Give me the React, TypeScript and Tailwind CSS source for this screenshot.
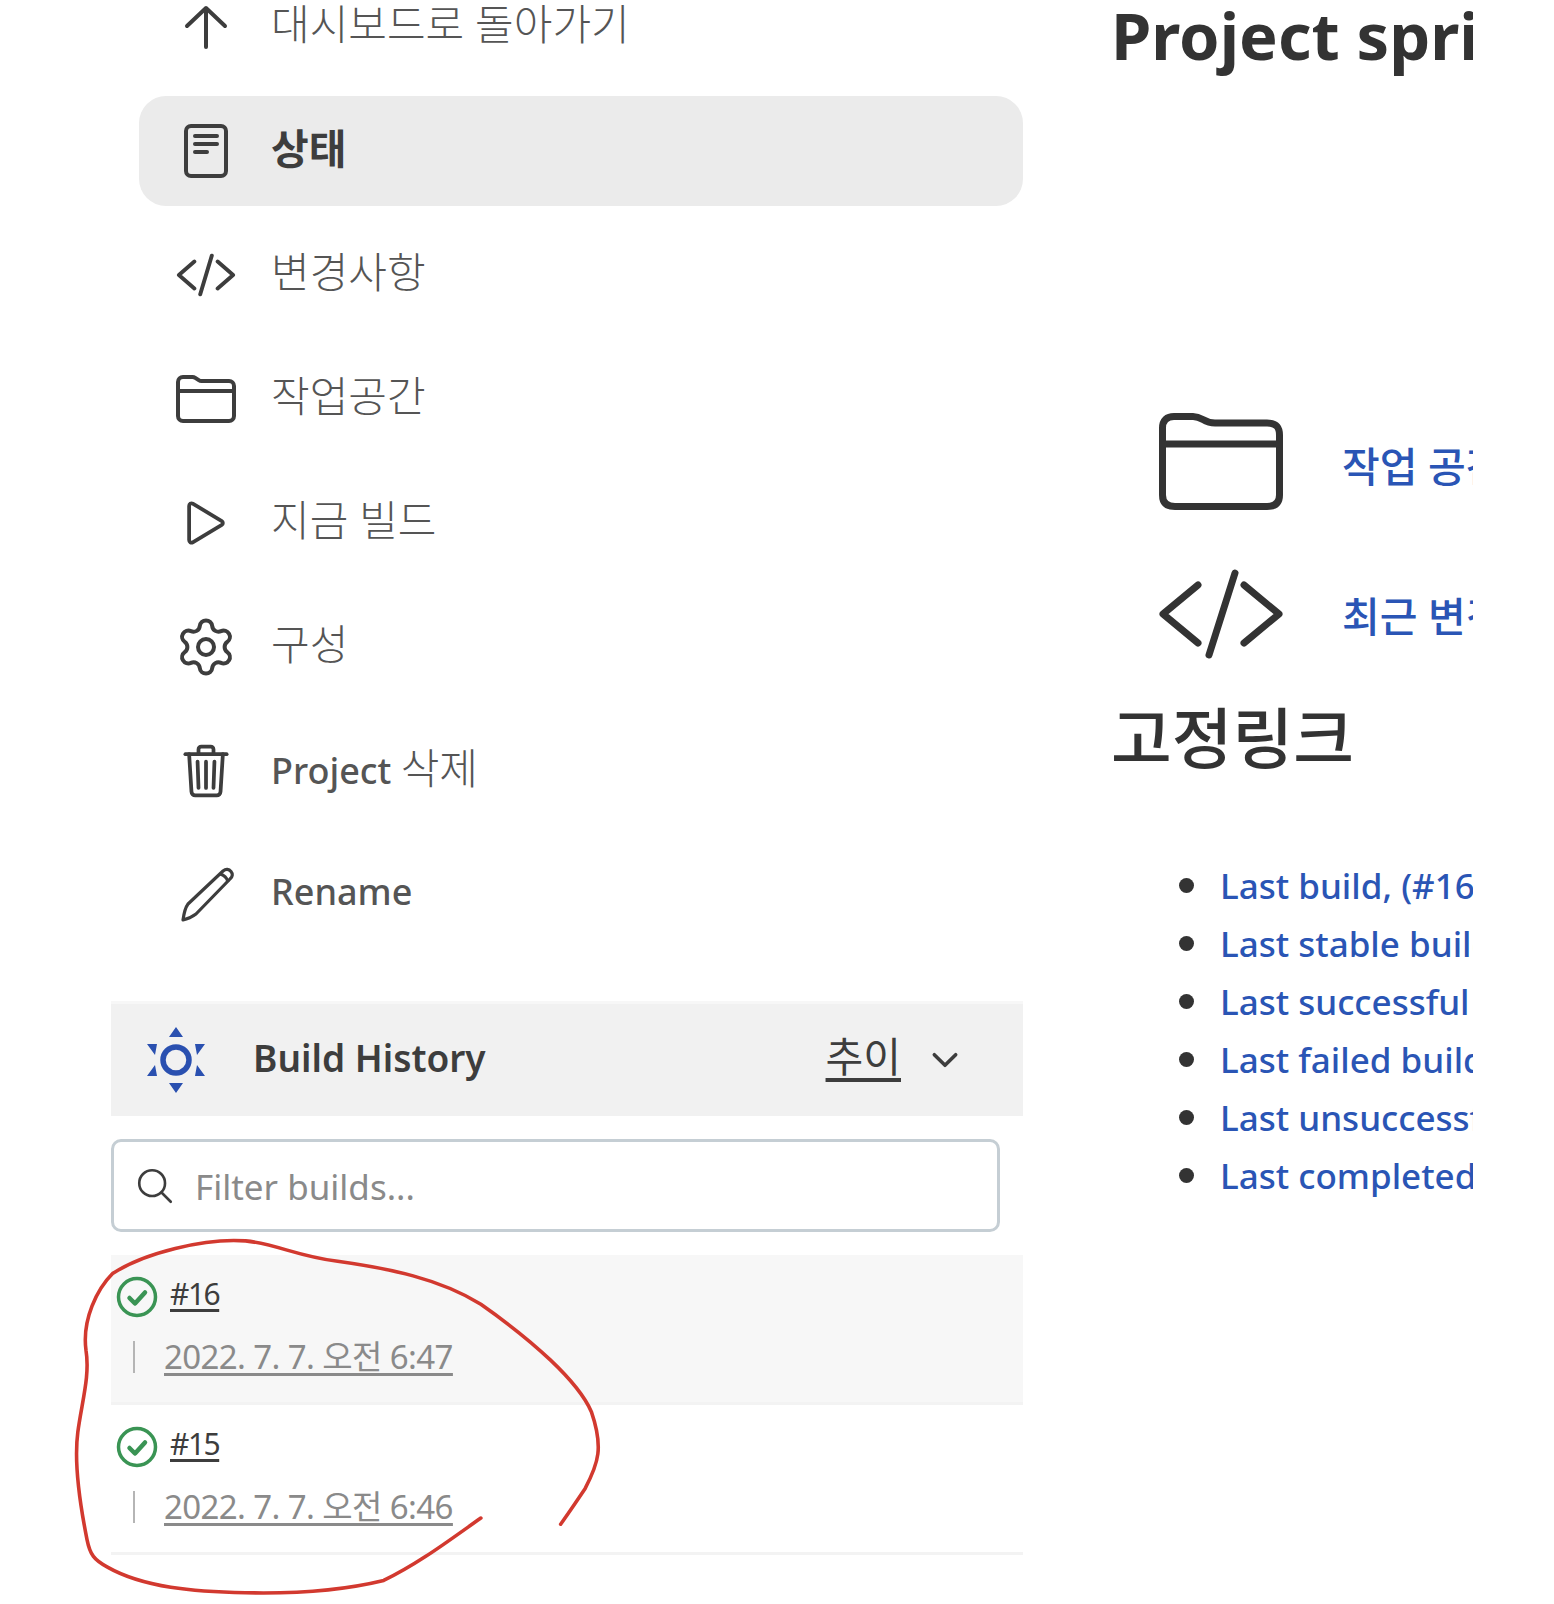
import React from "react";
import { IoCodeSlashOutline, IoFolderOutline, IoPlayOutline, IoTrashOutline, IoSearchOutline, IoChevronDownOutline } from "react-icons/io5";
import { Settings } from "lucide-react";

const ArrowUp = () => (
  <svg width="44" height="44" viewBox="0 0 44 44" fill="none" stroke="#3d3d3d" strokeWidth="4" strokeLinecap="round" strokeLinejoin="round">
    <path d="M3 21 L22 3 L41 21" />
    <path d="M22 4 V42" />
  </svg>
);
const Doc = () => (
  <svg width="46" height="56" viewBox="0 0 46 56" fill="none" stroke="#3d3d3d" strokeWidth="4" strokeLinecap="round">
    <rect x="3" y="3" width="40" height="50" rx="5" />
    <path d="M12 13h22M12 21h22M12 29h12" />
  </svg>
);
const Pencil = () => (
  <svg width="56" height="56" viewBox="0 0 56 56" fill="none" stroke="#3d3d3d" strokeWidth="3.2" strokeLinejoin="round">
    <path d="M5 53 C6 46 7 41 10 37 L45 4 C48 1.500 51 2 53 4.500 C55 7 54.500 10 52 12 L18 47 C14 50 10 52 5 53Z" />
    <path d="M42 7 C46 8 49 11 50 15" />
  </svg>
);
const Spinner = () => (
  <svg width="60" height="68" viewBox="0 0 60 68" fill="#2a50b0">
    <circle cx="30" cy="34" r="13" fill="none" stroke="#2a50b0" strokeWidth="5.500" />
    <path d="M30 1l7 10H23zM30 67l7-10H23zM1 18l10 0-2 11zM59 18l-10 0 2 11zM1 50l10 0-2-11zM59 50l-10 0 2-11z" />
  </svg>
);
const Check = () => (
  <svg width="42" height="42" viewBox="0 0 42 42" fill="none" className="shrink-0">
    <circle cx="21" cy="21" r="18.500" stroke="#3a9454" strokeWidth="3.500" />
    <path d="M13.500 22l5.500 5.500 10-11" stroke="#3a9454" strokeWidth="4.500" strokeLinecap="round" strokeLinejoin="round" />
  </svg>
);
const BigFolder = () => (
  <svg width="124" height="97" viewBox="0 0 124 97" fill="none" stroke="#333" strokeWidth="7" strokeLinejoin="round" className="shrink-0">
    <path d="M3.500 15 C3.500 7 8 3.500 15 3.500 H34 C44 3.500 44 10 56 10 H108 C117 10 120.500 14 120.500 22 V82 C120.500 90 116 93.500 108 93.500 H16 C8 93.500 3.500 90 3.500 82Z" />
    <path d="M4 31H120" />
  </svg>
);
const BigCode = () => (
  <svg width="124" height="90" viewBox="0 0 124 90" fill="none" stroke="#333" strokeWidth="7" strokeLinecap="round" strokeLinejoin="round" className="shrink-0">
    <path d="M39 16 L4 45 L39 74" />
    <path d="M76 4 L50 86" />
    <path d="M85 16 L120 45 L85 74" />
  </svg>
);

const Ko = ({ children }: { children: React.ReactNode }) => <span className="text-[42px] font-light">{children}</span>;

const nav = [
  { icon: <ArrowUp />, label: <Ko>대시보드로 돌아가기</Ko>, key: "a" },
  { icon: <Doc />, label: <span className="text-[41px]">상태</span>, active: true, key: "b" },
  { icon: <IoCodeSlashOutline size={62} color="#3d3d3d" />, label: <Ko>변경사항</Ko>, key: "c" },
  { icon: <IoFolderOutline size={64} color="#3d3d3d" />, label: <Ko>작업공간</Ko>, key: "d" },
  { icon: <IoPlayOutline size={60} color="#3d3d3d" />, label: <Ko>지금 빌드</Ko>, key: "e" },
  { icon: <Settings size={64} color="#3d3d3d" strokeWidth={1.500} />, label: <Ko>구성</Ko>, key: "f" },
  { icon: <IoTrashOutline size={60} color="#3d3d3d" />, label: <>Project <Ko>삭제</Ko></>, key: "g" },
  { icon: <Pencil />, label: "Rename", key: "h" },
];

const links = ["Last build, (#16", "Last stable build", "Last successful build", "Last failed build", "Last unsuccessful build", "Last completed build"];

const builds = [
  { id: "#16", date: "2022. 7. 7. 오전 6:47", shade: true },
  { id: "#15", date: "2022. 7. 7. 오전 6:46", shade: false },
];

export default function App() {
  return (
    <div className="relative h-[1604px] w-[1554px] overflow-hidden bg-white font-['Noto_Sans','Noto_Sans_CJK_KR',sans-serif] text-[#3d3d3d]">
      <div className="flex -mt-[28px]">
        <aside className="ml-[111px] w-[912px] shrink-0">
          <nav className="ml-[28px] flex flex-col gap-[14px]">
            {nav.map((n) => (
              <div key={n.key} className={`flex h-[110px] items-center rounded-[27px] ${n.active ? "bg-[#ebebeb] font-bold text-[#3d3d3d]" : "font-medium text-[#555]"}`}>
                <div className="ml-[33px] flex w-[68px] shrink-0 justify-center">{n.icon}</div>
                <span className="mb-[6px] ml-[31px] text-[36px] leading-none">{n.label}</span>
              </div>
            ))}
          </nav>
          <div className="mt-[51px] border-t-[3px] border-[#f7f7f7]">
            <div className="flex h-[112px] items-center bg-[#f1f1f1] pl-[35px]">
              <Spinner />
              <span className="mb-[6px] ml-[47px] text-[37px] font-semibold leading-none">Build History</span>
              <span className="mb-[8px] ml-auto text-[41px] leading-none underline underline-offset-[6px]">추이</span>
              <IoChevronDownOutline size={38} className="ml-[25px] mr-[59px]" />
            </div>
            <div className="mt-[23px] flex h-[93px] w-[889px] items-center rounded-[10px] border-[3px] border-[#c5ced4] pl-[20px]">
              <IoSearchOutline size={42} color="#3d3d3d" />
              <span className="ml-[19px] mt-[2px] text-[35px] leading-none text-[#8a8a8a]">Filter builds...</span>
            </div>
            <div className="mt-[23px]">
              {builds.map((b) => (
                <div key={b.id} className={`h-[150px] border-b-[3px] border-[#f3f3f3] pl-[5px] pt-[21px] ${b.shade ? "bg-[#f7f7f7]" : ""}`}>
                  <div className="flex items-center gap-[12px]">
                    <Check />
                    <span className="mb-[7px] text-[30px] leading-none tracking-[-1.5px] underline underline-offset-[4px]">{b.id}</span>
                  </div>
                  <div className="mt-[22px] flex items-center">
                    <div className="ml-[17px] h-[32px] w-[2px] bg-[#b5b5b5]" />
                    <span className="ml-[29px] text-[33px] leading-none tracking-[-0.6px] text-[#8a8a8a] underline underline-offset-[4px]">{b.date}</span>
                  </div>
                </div>
              ))}
            </div>
          </div>
        </aside>
        <main className="ml-[88px] h-[1604px] w-[362px] shrink-0 overflow-hidden whitespace-nowrap pt-[28px]">
          <h1 className="-mt-[13px] text-[65px] font-bold leading-[96px] text-[#333]">Project spring</h1>
          <div className="mt-[330px] flex h-[97px] items-center pl-[48px]">
            <BigFolder />
            <span className="ml-[59px] mt-[10px] shrink-0 text-[41px] font-medium leading-none text-[#2a55b5]">작업 공간</span>
          </div>
          <div className="mt-[59px] flex h-[90px] items-center pl-[48px]">
            <BigCode />
            <span className="ml-[59px] mt-[4px] shrink-0 text-[41px] font-medium leading-none text-[#2a55b5]">최근 변경사항</span>
          </div>
          <h2 className="mt-[36px] text-[66px] font-medium leading-[84px] text-[#333]">고정링크</h2>
          <ul className="mt-[77px] flex flex-col">
            {links.map((l) => (
              <li key={l} className="flex h-[58px] items-center pl-[68px]">
                <span className="h-[15px] w-[15px] shrink-0 rounded-full bg-[#333]" />
                <span className="ml-[26px] shrink-0 text-[35px] font-medium leading-none text-[#2a55b5]">{l}</span>
              </li>
            ))}
          </ul>
        </main>
      </div>
      <svg className="pointer-events-none absolute left-0 top-0" width="1554" height="1604" viewBox="0 0 1519 1568" fill="none">
        <path
          d="M470 1484 C440 1505 410 1528 375 1545 C330 1556 285 1558 240 1557 C190 1556 140 1552 105 1532 C92 1525 88 1520 85 1505 C78 1470 72 1430 76 1400 C80 1370 88 1345 84 1320 C80 1290 95 1260 110 1245 C140 1225 200 1210 240 1213 C270 1216 290 1228 330 1233 C380 1240 430 1250 470 1275 C520 1310 565 1350 578 1380 C590 1415 585 1430 572 1455 C562 1470 555 1480 548 1490"
          stroke="#d2392f"
          strokeWidth="3.500"
          strokeLinecap="round"
        />
      </svg>
    </div>
  );
}
